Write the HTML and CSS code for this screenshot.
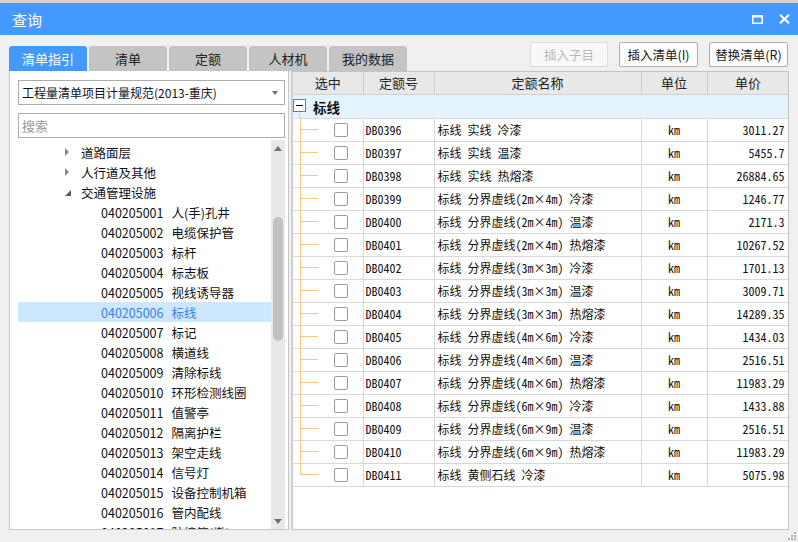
FILE: index.html
```html
<!DOCTYPE html>
<html lang="zh-CN">
<head>
<meta charset="utf-8">
<title>查询</title>
<link rel="stylesheet" href="styles.css">
</head>
<body>
<div class="window">
  <div class="topline"></div>
  <div class="titlebar">
    <span class="title">查询</span>
    <span class="tb-icons">
      <svg class="ic-max" width="11" height="9" viewBox="0 0 11 9"><rect x="0.75" y="0.75" width="9.5" height="7.5" fill="none" stroke="#fff" stroke-width="1.5"/><rect x="0" y="0" width="11" height="2.5" fill="#fff"/></svg>
      <svg class="ic-close" width="11" height="10" viewBox="0 0 11 10"><path d="M1 0.8 L10 9.2 M10 0.8 L1 9.2" stroke="#fff" stroke-width="2.2" fill="none"/></svg>
    </span>
  </div>
  <div class="toolbar">
    <div class="tabs">
      <div class="tab active">清单指引</div>
      <div class="tab">清单</div>
      <div class="tab">定额</div>
      <div class="tab">人材机</div>
      <div class="tab">我的数据</div>
    </div>
    <div class="buttons">
      <div class="btn disabled">插入子目</div>
      <div class="btn">插入清单(I)</div>
      <div class="btn">替换清单(R)</div>
    </div>
  </div>
  <div class="main">
    <div class="left">
      <div class="select"><span>工程量清单项目计量规范(2013-重庆)</span><i class="caret"></i></div>
      <div class="search">搜索</div>
      <div class="tree">
        <div class="tree-list">
          <div class="trow lvl"><i class="arr-r"></i>道路面层</div>
          <div class="trow lvl"><i class="arr-r"></i>人行道及其他</div>
          <div class="trow lvl"><i class="arr-d"></i>交通管理设施</div>
          <div class="trow leaf"><span class="code">040205001</span>人(手)孔井</div>
          <div class="trow leaf"><span class="code">040205002</span>电缆保护管</div>
          <div class="trow leaf"><span class="code">040205003</span>标杆</div>
          <div class="trow leaf"><span class="code">040205004</span>标志板</div>
          <div class="trow leaf"><span class="code">040205005</span>视线诱导器</div>
          <div class="trow leaf sel"><span class="code">040205006</span>标线</div>
          <div class="trow leaf"><span class="code">040205007</span>标记</div>
          <div class="trow leaf"><span class="code">040205008</span>横道线</div>
          <div class="trow leaf"><span class="code">040205009</span>清除标线</div>
          <div class="trow leaf"><span class="code">040205010</span>环形检测线圈</div>
          <div class="trow leaf"><span class="code">040205011</span>值警亭</div>
          <div class="trow leaf"><span class="code">040205012</span>隔离护栏</div>
          <div class="trow leaf"><span class="code">040205013</span>架空走线</div>
          <div class="trow leaf"><span class="code">040205014</span>信号灯</div>
          <div class="trow leaf"><span class="code">040205015</span>设备控制机箱</div>
          <div class="trow leaf"><span class="code">040205016</span>管内配线</div>
          <div class="trow leaf"><span class="code">040205017</span>防撞筒(墩)</div>
        </div>
        <div class="scrollbar">
          <div class="sb-btn"><i class="sb-up"></i></div>
          <div class="sb-track"><div class="sb-thumb"></div></div>
          <div class="sb-btn"><i class="sb-down"></i></div>
        </div>
      </div>
    </div>
    <div class="right">
      <table class="grid">
        <colgroup>
          <col class="c1"><col class="c2"><col class="c3"><col class="c4"><col class="c5">
        </colgroup>
        <thead>
          <tr><th>选中</th><th>定额号</th><th>定额名称</th><th>单位</th><th>单价</th></tr>
        </thead>
        <tbody>
          <tr class="group"><td colspan="5"><span class="minus"></span><b>标线</b></td></tr>
          <tr><td class="chk"><i class="box"></i></td><td class="mono">DB0396</td><td class="name mono">标线 实线 冷漆</td><td class="unit mono">km</td><td class="price mono">3011.27</td></tr>
          <tr><td class="chk"><i class="box"></i></td><td class="mono">DB0397</td><td class="name mono">标线 实线 温漆</td><td class="unit mono">km</td><td class="price mono">5455.7</td></tr>
          <tr><td class="chk"><i class="box"></i></td><td class="mono">DB0398</td><td class="name mono">标线 实线 热熔漆</td><td class="unit mono">km</td><td class="price mono">26884.65</td></tr>
          <tr><td class="chk"><i class="box"></i></td><td class="mono">DB0399</td><td class="name mono">标线 分界虚线(2m×4m) 冷漆</td><td class="unit mono">km</td><td class="price mono">1246.77</td></tr>
          <tr><td class="chk"><i class="box"></i></td><td class="mono">DB0400</td><td class="name mono">标线 分界虚线(2m×4m) 温漆</td><td class="unit mono">km</td><td class="price mono">2171.3</td></tr>
          <tr><td class="chk"><i class="box"></i></td><td class="mono">DB0401</td><td class="name mono">标线 分界虚线(2m×4m) 热熔漆</td><td class="unit mono">km</td><td class="price mono">10267.52</td></tr>
          <tr><td class="chk"><i class="box"></i></td><td class="mono">DB0402</td><td class="name mono">标线 分界虚线(3m×3m) 冷漆</td><td class="unit mono">km</td><td class="price mono">1701.13</td></tr>
          <tr><td class="chk"><i class="box"></i></td><td class="mono">DB0403</td><td class="name mono">标线 分界虚线(3m×3m) 温漆</td><td class="unit mono">km</td><td class="price mono">3009.71</td></tr>
          <tr><td class="chk"><i class="box"></i></td><td class="mono">DB0404</td><td class="name mono">标线 分界虚线(3m×3m) 热熔漆</td><td class="unit mono">km</td><td class="price mono">14289.35</td></tr>
          <tr><td class="chk"><i class="box"></i></td><td class="mono">DB0405</td><td class="name mono">标线 分界虚线(4m×6m) 冷漆</td><td class="unit mono">km</td><td class="price mono">1434.03</td></tr>
          <tr><td class="chk"><i class="box"></i></td><td class="mono">DB0406</td><td class="name mono">标线 分界虚线(4m×6m) 温漆</td><td class="unit mono">km</td><td class="price mono">2516.51</td></tr>
          <tr><td class="chk"><i class="box"></i></td><td class="mono">DB0407</td><td class="name mono">标线 分界虚线(4m×6m) 热熔漆</td><td class="unit mono">km</td><td class="price mono">11983.29</td></tr>
          <tr><td class="chk"><i class="box"></i></td><td class="mono">DB0408</td><td class="name mono">标线 分界虚线(6m×9m) 冷漆</td><td class="unit mono">km</td><td class="price mono">1433.88</td></tr>
          <tr><td class="chk"><i class="box"></i></td><td class="mono">DB0409</td><td class="name mono">标线 分界虚线(6m×9m) 温漆</td><td class="unit mono">km</td><td class="price mono">2516.51</td></tr>
          <tr><td class="chk"><i class="box"></i></td><td class="mono">DB0410</td><td class="name mono">标线 分界虚线(6m×9m) 热熔漆</td><td class="unit mono">km</td><td class="price mono">11983.29</td></tr>
          <tr><td class="chk last"><i class="box"></i></td><td class="mono">DB0411</td><td class="name mono">标线 黄侧石线 冷漆</td><td class="unit mono">km</td><td class="price mono">5075.98</td></tr>
        </tbody>
      </table>
    </div>
  </div>
  <div class="statusbar">
    <svg class="grip" width="8" height="8" viewBox="0 0 8 8" fill="#b0b0b0"><rect x="6" y="0" width="2" height="2"/><rect x="3" y="3" width="2" height="2"/><rect x="6" y="3" width="2" height="2"/><rect x="0" y="6" width="2" height="2"/><rect x="3" y="6" width="2" height="2"/><rect x="6" y="6" width="2" height="2"/></svg>
  </div>
</div>
</body>
</html>
```

FILE: styles.css
```css
* { box-sizing: border-box; margin: 0; padding: 0; }
html, body { width: 798px; height: 542px; overflow: hidden; }
body {
  background: #f0f0f0;
  font-family: "Noto Sans CJK SC", "Microsoft YaHei", sans-serif;
  font-size: 12px;
  color: #1a1a1a;
}
.window { display: flex; flex-direction: column; height: 542px; }
.topline { height: 3px; background: #d2d2d2; }
.titlebar {
  height: 32px;
  background: #4499ff;
  color: #fff;
  display: flex;
  align-items: center;
  padding: 0 8px 0 12px;
}
.title { flex: 1; font-size: 15px; line-height: 1; }
.tb-icons { display: flex; align-items: center; gap: 16px; }
.ic-max { display: block; }
.ic-close { display: block; }

.toolbar { height: 36px; display: flex; padding: 0 10px 0 9px; }
.tabs { display: flex; gap: 2px; align-self: flex-end; }
.tab {
  width: 78px;
  height: 25px;
  background: #c4c4c4;
  border-radius: 3px 3px 0 0;
  font-size: 13px;
  line-height: 25px;
  text-align: center;
  color: #222;
}
.tab.active { background: #4499ff; color: #fff; }
.buttons { margin-left: auto; margin-top: 7px; display: flex; gap: 11px; }
.btn {
  width: 79px;
  height: 25px;
  border: 1px solid #adadad;
  border-radius: 2px;
  background: #fdfdfd;
  font-size: 12.5px;
  line-height: 23px;
  text-align: center;
  color: #1a1a1a;
}
.btn.disabled { width: 78px; border-color: #dcdcdc; color: #b8b8b8; background: #f8f8f8; }

.main { height: 459px; display: flex; padding: 0 9px; gap: 2px; }
.left {
  width: 280px;
  background: #fff;
  border: 1px solid #c8c8c8;
  border-top: none;
  padding: 9px 3px 0 8px;
  display: flex;
  flex-direction: column;
}
.select {
  height: 25px;
  border: 1px solid #ababab;
  display: flex;
  align-items: center;
  padding: 0 6px 0 3px;
  font-size: 12px;
  color: #111;
}
.select span { flex: 1; }
.caret {
  width: 0; height: 0;
  border-left: 3.5px solid transparent;
  border-right: 3.5px solid transparent;
  border-top: 4px solid #707070;
}
.search {
  margin-top: 8px;
  height: 25px;
  border: 1px solid #ababab;
  padding-left: 3px;
  line-height: 23px;
  font-size: 13px;
  color: #9a9a9a;
}
.tree { margin-top: 2px; flex: 1; display: flex; min-height: 0; }
.tree-list { flex: 1; overflow: hidden; padding-top: 2px; }
.trow { height: 20px; display: flex; align-items: center; font-size: 12.5px; white-space: nowrap; color: #111; }
.trow.lvl { padding-left: 47px; }
.trow.leaf { padding-left: 83px; }
.trow .code { margin-right: 8px; }
.trow.sel { background: #cce8ff; color: #3c7fe0; }
.arr-r {
  width: 0; height: 0;
  border-top: 4px solid transparent;
  border-bottom: 4px solid transparent;
  border-left: 4px solid #8a8a8a;
  margin-right: 12px;
}
.arr-d {
  width: 0; height: 0;
  border-left: 6px solid transparent;
  border-bottom: 6px solid #5a5a5a;
  margin-right: 10px;
  margin-top: 2px;
}
.scrollbar { width: 14px; background: #e8e8e8; display: flex; flex-direction: column; }
.sb-btn { height: 16px; display: flex; align-items: center; justify-content: center; }
.sb-up {
  width: 0; height: 0;
  border-left: 4.5px solid transparent;
  border-right: 4.5px solid transparent;
  border-bottom: 5px solid #707070;
}
.sb-down {
  width: 0; height: 0;
  border-left: 4.5px solid transparent;
  border-right: 4.5px solid transparent;
  border-top: 5px solid #707070;
}
.sb-track { flex: 1; padding: 61px 2px 0; }
.sb-thumb { height: 124px; background: #c2c2c2; border-radius: 5px; }

.right { flex: 1; background: #fff; border: 1px solid #c4c4c4; border-left: 2px solid #d0d0d0; overflow: hidden; }
.grid { border-collapse: collapse; table-layout: fixed; width: 496px; }
.c1 { width: 70px; }
.c2 { width: 71px; }
.c3 { width: 207px; }
.c4 { width: 66px; }
.c5 { width: 82px; }
.grid th {
  height: 22px;
  background: #e8e8e8;
  border-right: 1px solid #cfcfcf;
  border-bottom: 1px solid #cfcfcf;
  font-weight: normal;
  font-size: 13px;
  color: #222;
  text-align: center;
}
.grid td {
  height: 23px;
  border-right: 1px solid #d8d8d8;
  border-bottom: 1px solid #d8d8d8;
  white-space: nowrap;
  overflow: hidden;
  padding: 0 2px;
  font-size: 12px;
  color: #111;
}
.grid tr.group td {
  height: 24px;
  background: #e5f3ff linear-gradient(#fcc87c, #fcc87c) no-repeat 6px 100% / 1px 5px;
  padding-left: 0;
}
.minus {
  display: inline-block;
  vertical-align: middle;
  width: 13px;
  height: 13px;
  border: 1px solid #7a7a7a;
  background: #fff linear-gradient(#111, #111) no-repeat center / 7px 1px;
  margin: 0 7px 0 0;
  position: relative;
  top: -1px;
}
.grid tr.group b { font-size: 13.5px; vertical-align: middle; color: #111; }
.grid td.chk {
  padding: 0 0 0 41px;
  background:
    linear-gradient(#fcc87c, #fcc87c) no-repeat 7px 0 / 1px 100%,
    linear-gradient(#fcc87c, #fcc87c) no-repeat 7px 50% / 18px 1px;
}
.grid td.chk.last {
  background:
    linear-gradient(#fcc87c, #fcc87c) no-repeat 7px 0 / 1px 50%,
    linear-gradient(#fcc87c, #fcc87c) no-repeat 7px 50% / 18px 1px;
}
.box {
  display: block;
  width: 14px;
  height: 14px;
  border: 1px solid #9a9a9a;
  border-radius: 2px;
  background: #fff;
}
.mono {
  font-family: "Noto Sans Mono CJK SC", "Liberation Mono", monospace;
  font-size: 12px;
}
.grid td.name { padding-left: 3px; }
.grid td.unit { text-align: center; }
.grid td.price { text-align: right; padding-right: 4px; }

.statusbar { flex: 1; display: flex; justify-content: flex-end; align-items: flex-end; padding: 0 2px 2px 0; }
.grip { display: block; }
```
